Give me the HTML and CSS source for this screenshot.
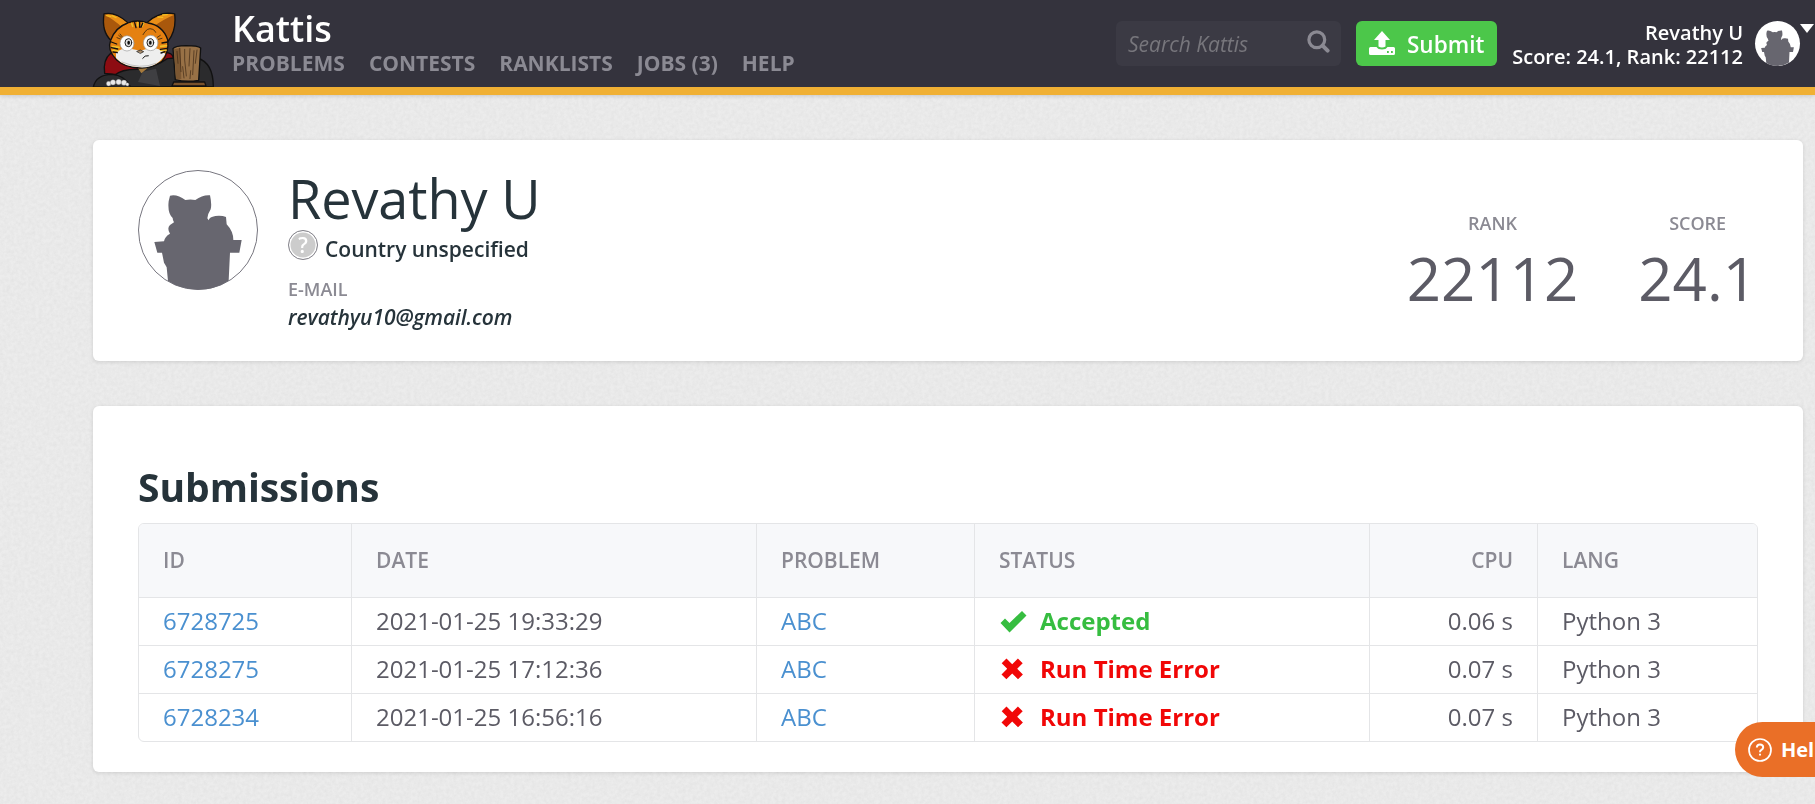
FILE: index.html
```html
<!DOCTYPE html>
<html lang="en">
<head>
<meta charset="utf-8">
<title>Revathy U – Kattis</title>
<link rel="stylesheet" href="styles.css">
</head>
<body>
<svg class="texture" aria-hidden="true">
  <filter id="grain" x="0" y="0" width="100%" height="100%">
    <feTurbulence type="fractalNoise" baseFrequency="0.28" numOctaves="3" seed="4" stitchTiles="stitch"/>
    <feColorMatrix values="0 0 0 0 0.5  0 0 0 0 0.5  0 0 0 0 0.5  0.26 0 0 0 -0.08"/>
  </filter>
  <rect width="100%" height="100%" filter="url(#grain)"/>
</svg>
<svg width="0" height="0" class="defs" aria-hidden="true">
  <symbol id="silhouette" viewBox="0 0 360 360">
    <path d="M96 77Q118 72 142 90Q157 87 172 90Q194 74 216 76Q222 104 218 118Q210 130 208 145L212 151Q214 141 232 138Q252 136 264 141L266 163Q286 184 286 210H311L304 248H276L272 332Q230 359 180 359Q130 359 90 333L86 292Q82 284 78 278L72 248H58L49 216L78 214Q80 200 96 191Q86 175 96 165L108 157Q104 150 104 144Q88 130 92 94Z"/>
  </symbol>
</svg>

<header class="site-header">
  <svg class="mascot" viewBox="36 30 372 231" stroke="#111" stroke-width="4" stroke-linejoin="round" stroke-linecap="round">
    <path fill="#8d0c12" d="M74 220Q68 180 92 160L130 165L250 158Q276 156 280 172L270 200L120 225Z"/>
    <path fill="#2b2b2d" d="M104 226Q126 206 180 208Q230 198 262 176L284 174L352 174Q400 188 400 261H104Z"/>
    <path fill="#3f3f42" stroke="none" d="M188 215L228 206L240 258L174 246Z"/>
    <path fill="#a67a3d" stroke="none" d="M172 202H206L184 220Z"/>
    <path fill="#2b2b2d" d="M40 261Q48 224 96 223Q134 226 150 258V263Z"/>
    <path fill="#a9580c" d="M94 122Q64 96 72 42Q104 34 143 68Z"/>
    <path fill="#a9580c" d="M264 124Q290 92 284 42Q240 32 201 68Z"/>
    <path fill="#e98f18" stroke="none" d="M73 44Q105 37 141 68L124 80Q104 60 73 44ZM283 44Q244 35 204 68L222 78Q254 56 283 44Z"/>
    <path fill="none" stroke="#f2bd20" d="M80 47L92 49M96 47L108 53M248 45L262 44M234 51L248 52"/>
    <path fill="#e58111" d="M143 69Q172 57 204 69Q248 76 263 119Q268 158 245 185Q215 205 180 204Q134 202 110 180Q80 150 92 121Q106 82 143 69Z"/>
    <path fill="#eee" stroke="none" d="M108 158Q125 142 152 146L181 152L208 145Q242 142 256 162Q232 205 180 202Q130 200 108 174Z"/>
    <path fill="none" stroke="#edc12a" stroke-width="5" d="M155 70L158 79M173 68V78M191 69L187 78M98 140L117 142M99 151L114 152M259 137L242 139M258 151L242 151"/>
    <path fill="none" stroke-width="4" d="M164 68L168 83M179 66V82M188 70L183 82M94 126L110 132M94 143L113 147M99 156L112 158M263 126L246 129M261 145L241 148M255 155L243 159"/>
    <path fill="none" stroke-width="2" d="M189 104Q202 80 218 88Q224 90 227 97M116 106L124 113M111 113L121 117M120 102L127 111M232 112L241 106M235 118L246 115"/>
    <g stroke="#999" stroke-width="2" fill="#fff"><ellipse cx="141" cy="130" rx="21" ry="23"/><ellipse cx="212" cy="129" rx="22" ry="23"/></g>
    <g stroke="#222" stroke-width="3" fill="#ddd"><ellipse cx="145" cy="128" rx="10" ry="12"/><ellipse cx="211" cy="128" rx="10" ry="12"/></g>
    <g stroke="none" fill="#111"><ellipse cx="146" cy="128" rx="4" ry="6"/><ellipse cx="211" cy="128" rx="4" ry="6"/></g>
    <path fill="#a88a68" stroke-width="2" d="M171 154L181 150L191 155L182 160Z"/>
    <path fill="none" stroke-width="3" d="M188 175Q194 165 205 167"/>
    <path fill="none" stroke="#aaa" stroke-width="2" d="M126 186Q180 210 228 190"/>
    <g fill="#e9e9e9" stroke="#777" stroke-width="1"><circle cx="86" cy="251" r="7"/><circle cx="99" cy="247" r="8"/><circle cx="116" cy="246" r="8"/><circle cx="132" cy="248" r="8"/><circle cx="142" cy="253" r="5"/></g>
    <path fill="#987146" d="M279 146Q284 138 318 137Q354 137 362 144L356 241Q318 247 286 239Z"/>
    <path fill="#7b5732" stroke="none" d="M282 148L301 144L304 238L288 237Z"/>
    <path fill="none" stroke="#3b2614" stroke-width="2" d="M291 154L294 190M299 145L303 215M314 148V180L319 228M330 146L327 198M342 152L338 224M351 150L346 190M308 200L312 234M332 212L330 236"/>
    <path fill="#79522c" d="M281 246H374L378 258H276Z"/>
  </svg>
  <div class="brand">
    <a class="brand-name">Kattis</a>
    <nav class="main-nav"><a>PROBLEMS</a><a>CONTESTS</a><a>RANKLISTS</a><a>JOBS (3)</a><a>HELP</a></nav>
  </div>
  <div class="search">
    <span class="search-hint">Search Kattis</span>
    <svg class="search-icon" viewBox="0 0 23 23" fill="none" stroke="#8b8a93"><circle cx="9.8" cy="9.8" r="7.9" stroke-width="3.2"/><path d="M15.6 15.6L20.6 20.6" stroke-width="4" stroke-linecap="round"/></svg>
  </div>
  <a class="submit">
    <svg class="submit-icon" viewBox="0 0 26 25" fill="#fff"><path d="M13 0L21 9H16.5V15.5Q13 17.5 9.500 15.500V9H5Z"/><path fill-rule="evenodd" d="M1.500 16H7.500Q9 18.500 13 18.500T18.500 16H24.500Q26 16 26 17.500V22.500Q26 24 24.500 24H1.500Q0 24 0 22.500V17.500Q0 16 1.500 16ZM18 20V22H19.800V20ZM22 20V22H23.800V20Z"/></svg>
    <span>Submit</span>
  </a>
  <div class="account"><span>Revathy U</span><span>Score: 24.1, Rank: 22112</span></div>
  <div class="mini-avatar"><svg class="mini-picture"><use href="#silhouette"/></svg></div>
  <span class="caret"></span>
</header>

<main class="content">
  <section class="card profile">
    <div class="avatar"><svg class="avatar-picture"><use href="#silhouette"/></svg></div>
    <div class="person">
      <h1 class="name">Revathy U</h1>
      <div class="country"><span class="flag">?</span><span class="country-name">Country unspecified</span></div>
      <div class="label email-label">E-MAIL</div>
      <div class="email">revathyu10@gmail.com</div>
    </div>
    <div class="stat"><span class="label">RANK</span><span class="stat-value">22112</span></div>
    <div class="stat stat-score"><span class="label">SCORE</span><span class="stat-value">24.1</span></div>
  </section>

  <section class="card submissions">
    <h2 class="heading">Submissions</h2>
    <div class="table-frame">
      <table class="table">
        <colgroup><col class="c-id"><col class="c-date"><col class="c-problem"><col class="c-status"><col class="c-cpu"><col class="c-lang"></colgroup>
        <thead><tr><th>ID</th><th>DATE</th><th>PROBLEM</th><th>STATUS</th><th class="num">CPU</th><th>LANG</th></tr></thead>
        <tbody>
          <tr><td><a>6728725</a></td><td>2021-01-25 19:33:29</td><td><a>ABC</a></td><td class="accepted"><span class="status"><svg class="mark" viewBox="0 0 27 24"><path fill="currentColor" d="M0.500 13L5 8.500L9.500 13L22 1L26.500 5.500L9.500 22.500Z"/></svg>Accepted</span></td><td class="num">0.06 s</td><td>Python 3</td></tr>
          <tr><td><a>6728275</a></td><td>2021-01-25 17:12:36</td><td><a>ABC</a></td><td class="rejected"><span class="status"><svg class="mark" viewBox="0 0 27 24"><path fill="currentColor" d="M6.500 0.500L12.200 6.200L17.900 0.500L22.700 5.300L17.200 10.800L22.900 16.500L18 21.300L12.200 15.600L6.400 21.300L1.500 16.500L7.200 10.800L1.700 5.300Z"/></svg>Run Time Error</span></td><td class="num">0.07 s</td><td>Python 3</td></tr>
          <tr><td><a>6728234</a></td><td>2021-01-25 16:56:16</td><td><a>ABC</a></td><td class="rejected"><span class="status"><svg class="mark" viewBox="0 0 27 24"><path fill="currentColor" d="M6.500 0.500L12.200 6.200L17.900 0.500L22.700 5.300L17.200 10.800L22.900 16.500L18 21.300L12.200 15.600L6.400 21.300L1.500 16.500L7.200 10.800L1.700 5.300Z"/></svg>Run Time Error</span></td><td class="num">0.07 s</td><td>Python 3</td></tr>
        </tbody>
      </table>
    </div>
  </section>
</main>

<button class="help">
  <svg class="help-icon" viewBox="0 0 24 24" fill="none" stroke="#fff" stroke-width="1.700"><circle cx="12" cy="12" r="11"/><path stroke-width="2" d="M8.800 9.500Q9 6.500 12 6.500T15.200 9.300Q15.200 10.800 13.400 11.900Q12 12.700 12 14.200M12 15.700V17.500"/></svg>
  <span>Help</span>
</button>
</body>
</html>
```
FILE: styles.css
```css
* { box-sizing: border-box; }
html, body { height: 100%; overflow: hidden; }
body {
  margin: 0;
  background: #ececec;
  color: #26333a;
  font-family: "Open Sans", "Noto Sans", sans-serif;
  font-size: 24px;
}
.texture { position: fixed; inset: 0; width: 100%; height: 100%; z-index: -1; }
.defs { position: absolute; }

.site-header {
  display: flex;
  align-items: flex-start;
  height: 95px;
  padding-left: 92px;
  background: #34333d;
  border-bottom: 8px solid #f0b034;
  box-shadow: 0 1px 4px rgba(0, 0, 0, .15);
  color: #fff;
}
.mascot { flex: none; width: 124px; height: 77px; margin-top: 10px; }
.brand { flex: none; width: 600px; margin-left: 16px; margin-right: 284px; padding-top: 5px; }
.brand-name { display: block; font-size: 36px; font-weight: 600; line-height: 48px; }
.main-nav { display: flex; gap: 24px; white-space: nowrap; color: #8b8a93; font-size: 21px; font-weight: 700; line-height: 21px; }
.search {
  display: flex; flex: none; justify-content: space-between;
  width: 225px; height: 45px; margin-top: 21px;
  padding: 0 11px 0 12px;
  border-radius: 6px; background: #3b3a44;
}
.search-hint { color: #77767c; font-size: 21px; font-style: italic; line-height: 46px; }
.search-icon { width: 23px; height: 23px; margin-top: 9px; }
.submit {
  display: flex; flex: none; gap: 12px;
  width: 141px; height: 45px; margin: 21px 0 0 15px; padding-left: 13px;
  border-radius: 6px; background: #4cc74a;
  font-size: 22.5px; font-weight: 600; line-height: 47px;
}
.submit-icon { width: 26px; height: 25px; margin-top: 10px; }
.account {
  display: flex; flex: none; flex-direction: column; align-items: flex-end;
  width: 246px; margin-top: 21px;
  white-space: nowrap; font-size: 20px; font-weight: 600; line-height: 24px;
}
.mini-avatar { flex: none; width: 45px; height: 45px; margin: 21px 0 0 12px; border-radius: 50%; background: #fff; fill: #67666f; }
.mini-picture { display: block; width: 45px; height: 45px; }
.caret { flex: none; margin-top: 24px; border: solid transparent; border-width: 9px 7.5px 0; border-top-color: #fff; }

.content { display: flex; flex-direction: column; gap: 45px; width: 1710px; margin: 45px 0 0 93px; }
.card { border-radius: 6px; background: #fff; box-shadow: 0 1px 4px rgba(0, 0, 0, .12); }
.profile { display: flex; height: 221px; padding: 30px 46px 0 45px; }
.avatar { flex: none; width: 120px; height: 120px; border: 1px solid #77767f; border-radius: 50%; fill: #67666f; }
.avatar-picture { display: block; width: 120px; height: 120px; margin: -1px; }
.person { flex: 1; margin-left: 30px; }
.name { margin: -2px 0 2px; font-size: 54px; font-weight: 400; letter-spacing: -0.1px; line-height: 60px; }
.country { display: flex; gap: 7px; font-size: 21px; line-height: 38px; font-weight: 600; }
.flag {
  width: 30px; height: 30px; border: 1px solid #85848c; border-radius: 50%;
  background: #ccc; box-shadow: inset 0 0 0 1.500px #fff;
  color: #fff; font-weight: 600; line-height: 28px; text-align: center;
}
.label { color: #8b8a93; font-size: 18px; font-weight: 600; line-height: 24px; }
.email-label { margin-top: 9px; }
.email { font-size: 21px; font-style: italic; font-weight: 600; line-height: 32px; letter-spacing: -0.06px; }
.stat { display: flex; flex: none; flex-direction: column; align-items: center; padding-top: 41px; }
.stat-score { margin-left: 60px; }
.stat-value { color: #5c5b65; font-size: 60px; font-weight: 400; line-height: 86px; }

.submissions { height: 366px; padding: 56px 45px 0; }
.heading { margin: 0; font-size: 39px; font-weight: 700; line-height: 50px; letter-spacing: -0.05px; }
.table-frame { width: 1620px; margin-top: 11px; border: 1px solid #e4e5e7; border-radius: 6px; overflow: hidden; }
.table { width: 100%; table-layout: fixed; border-collapse: separate; border-spacing: 0; color: #5c5b65; }
.table th { height: 74px; padding: 0 24px 2px; border-bottom: 1px solid #e4e5e7; background: #f7f8fa; color: #8b8a93; font-size: 21px; font-weight: 600; text-align: left; }
.table td { height: 48px; padding: 0 24px 2px; border-bottom: 1px solid #e4e5e7; line-height: 32px; font-weight: 400; }
.table th + th, .table td + td { border-left: 1px solid #e4e5e7; }
.table tbody tr:last-child td { height: 47px; border-bottom: 0; }
.table a { color: #4a90d0; }
.table .num { text-align: right; }
.c-id { width: 212px; }
.c-date { width: 405px; }
.c-problem { width: 218px; }
.c-status { width: 395px; }
.c-cpu { width: 168px; }
.status { display: flex; gap: 13px; padding-left: 1px; font-weight: 700; }
.mark { width: 27px; height: 24px; margin-top: 5px; }
.table .accepted { color: #36bd40; }
.table .rejected { color: #f10707; }

.help {
  position: fixed; left: 1735px; top: 722px;
  display: flex; align-items: center; gap: 9px;
  width: 130px; height: 55px; padding: 0 0 0 13px;
  border: 0; border-radius: 28px; background: #ea6f27; color: #fff;
  font: 700 20px/26px "Open Sans", sans-serif;
}
.help-icon { width: 24px; height: 24px; }
```
